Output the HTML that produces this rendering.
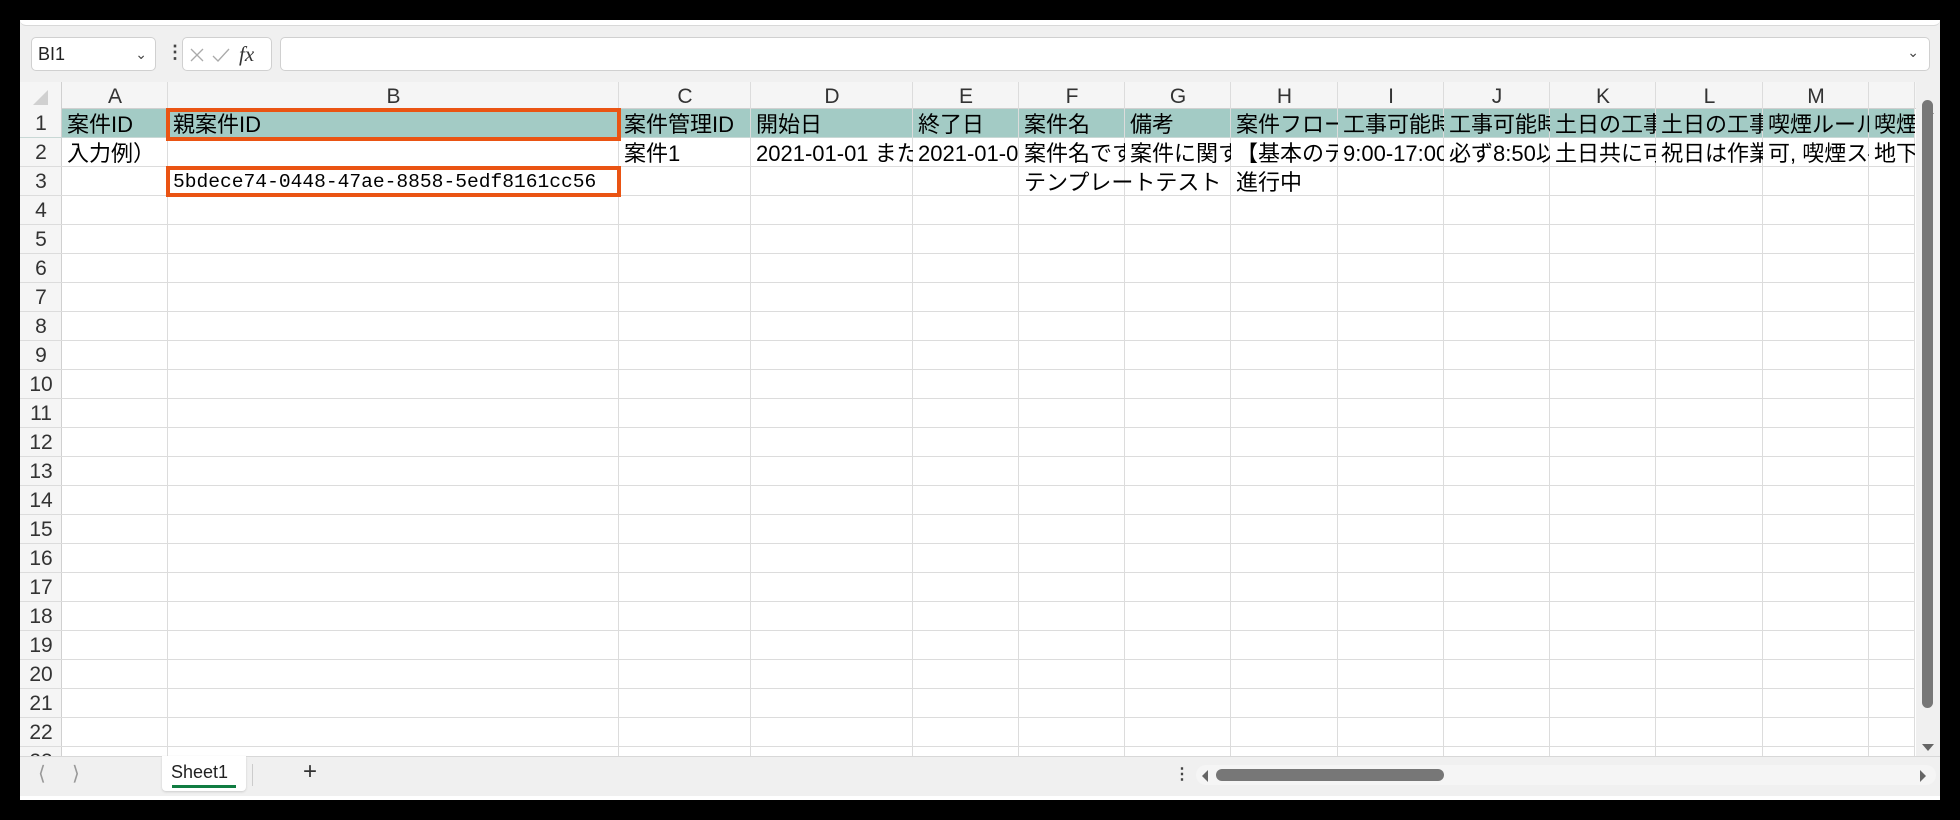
<!DOCTYPE html>
<html><head><meta charset="utf-8"><style>
*{margin:0;padding:0;box-sizing:border-box}
body{width:1960px;height:820px;background:#000;position:relative;overflow:hidden;font-family:"Liberation Sans","Noto Sans CJK JP",sans-serif}
#win{position:absolute;left:20px;top:20px;width:1920px;height:780px;background:#f0f0f0;overflow:hidden}
.a{position:absolute}
.c{position:absolute;overflow:hidden;white-space:nowrap;font-size:22px;line-height:31px;color:#000;padding-left:5px;height:28px;font-family:"Liberation Sans","Noto Sans CJK JP",sans-serif}
.vl{position:absolute;width:1px;background:#dcdcdc}
.hl{position:absolute;height:1px;background:#dcdcdc}
.rh{position:absolute;left:0;width:42px;text-align:center;font-size:21px;color:#333;line-height:30px}
.ch{position:absolute;top:62px;height:27px;text-align:center;font-size:21px;color:#333;line-height:29px}
</style></head><body>
<div id="win">
 <div class="a" style="left:0;top:0;width:1920px;height:6px;background:#fff;border-bottom:1px solid #d8d8d8;border-radius:0 0 6px 6px"></div>
 <div class="a" style="left:11px;top:17px;width:125px;height:34px;background:#fff;border:1px solid #d0d0d0;border-radius:5px;font-size:18px;line-height:32px;padding-left:6px;color:#222">BI1<span style="position:absolute;right:8px;top:0;font-size:14px;color:#444">&#8964;</span></div>
 <div class="a" style="left:146px;top:22px;font-size:18px;font-weight:bold;color:#444">&#8942;</div>
 <div class="a" style="left:162px;top:17px;width:90px;height:34px;background:#fff;border:1px solid #d0d0d0;border-radius:5px">
  <svg width="90" height="34" style="position:absolute;left:0;top:0"><path d="M8 11 L20 23 M20 11 L8 23" stroke="#aaa" stroke-width="1.3" fill="none"/><path d="M30 18 L35 23 L46 11" stroke="#aaa" stroke-width="1.3" fill="none"/></svg>
  <span style="position:absolute;left:56px;top:4px;font-family:'Liberation Serif',serif;font-style:italic;font-size:21px;color:#333">fx</span></div>
 <div class="a" style="left:260px;top:17px;width:1650px;height:34px;background:#fff;border:1px solid #d0d0d0;border-radius:5px"><span style="position:absolute;right:10px;top:6px;font-size:14px;color:#444">&#8964;</span></div>
 <div class="a" style="left:0;top:62px;width:1896px;height:674px;background:#fff"></div>
 <div class="a" style="left:0;top:62px;width:1896px;height:27px;background:#f5f5f5;border-bottom:1px solid #d0d0d0"></div>
 <div class="a" style="left:0;top:62px;width:42px;height:674px;background:#f5f5f5;border-right:1px solid #d0d0d0"></div>
 <svg class="a" style="left:10px;top:68px" width="20" height="18"><path d="M18 2 L18 17 L3 17 Z" fill="#d0d0d0"/></svg>
 <div id="g"></div>
 <div class="a" style="left:1896px;top:62px;width:24px;height:674px;background:#f0f0f0"></div>
 <svg class="a" style="left:1900px;top:84px" width="16" height="12"><path d="M2 10 L8 3 L14 10 Z" fill="#666"/></svg>
 <div class="a" style="left:1902px;top:80px;width:11px;height:608px;background:#777;border-radius:6px"></div>
 <svg class="a" style="left:1900px;top:722px" width="16" height="12"><path d="M2 2 L8 9 L14 2 Z" fill="#666"/></svg>
 <div class="a" style="left:0;top:736px;width:1920px;height:40px;background:#f0f0f0;border-top:1px solid #d8d8d8"></div>
 <div class="a" style="left:18px;top:741px;font-size:20px;color:#999">&#10216;</div>
 <div class="a" style="left:52px;top:741px;font-size:20px;color:#999">&#10217;</div>
 <div class="a" style="left:142px;top:736px;width:84px;height:35px;background:#fff;border-radius:0 0 4px 4px;box-shadow:0 1px 2px #ccc"></div>
 <div class="a" style="left:151px;top:742px;font-size:18px;color:#222">Sheet1</div>
 <div class="a" style="left:152px;top:765px;width:64px;height:3px;background:#107c41"></div>
 <div class="a" style="left:232px;top:744px;width:1px;height:22px;background:#ccc"></div>
 <div class="a" style="left:283px;top:738px;font-size:24px;color:#333">+</div>
 <div class="a" style="left:1154px;top:744px;font-size:16px;font-weight:bold;color:#444">&#8942;</div>
 <div class="a" style="left:1176px;top:745px;width:740px;height:20px;background:#f5f5f5;border-radius:10px"></div>
 <svg class="a" style="left:1180px;top:749px" width="10" height="14"><path d="M8 1 L2 7 L8 13 Z" fill="#666"/></svg>
 <div class="a" style="left:1196px;top:749px;width:228px;height:12px;background:#777;border-radius:6px"></div>
 <svg class="a" style="left:1898px;top:749px" width="10" height="14"><path d="M2 1 L8 7 L2 13 Z" fill="#666"/></svg>
 <div class="a" style="left:0;top:776px;width:1920px;height:4px;background:#fff"></div>
</div>
<script>
var X=[42,148,599,731,893,999,1105,1211,1318,1424,1530,1636,1743,1849,1895];
var L="ABCDEFGHIJKLM ";
var h="";
for(var i=0;i<14;i++){h+='<div class="ch" style="left:'+X[i]+'px;width:'+(X[i+1]-X[i])+'px">'+L[i]+'</div>';}
h+='<div class="a" style="left:42px;top:89px;width:1853px;height:29px;background:#a3cbc5"></div>';
for(var r=1;r<=23;r++){var t=89+(r-1)*29;h+='<div class="rh" style="top:'+t+'px">'+r+'</div>';h+='<div class="hl" style="left:0;width:1895px;top:'+(t+28)+'px;'+(r==1?'background:#c8d8d5':'')+'"></div>';}
for(var i=1;i<X.length;i++){h+='<div class="vl" style="left:'+(X[i]-1)+'px;top:62px;height:674px"></div>';}
function c(col,row,txt,span,extra){var x=X[col],w=X[col+(span||1)]-x;var t=89+(row-1)*29;h+='<div class="c" style="left:'+x+'px;top:'+t+'px;width:'+w+'px;'+(extra||'')+'">'+txt+'</div>';}
var r1=["案件ID","親案件ID","案件管理ID","開始日","終了日","案件名","備考","案件フロー","工事可能時間","工事可能時間","土日の工事","土日の工事","喫煙ルール","喫煙"];
for(var i=0;i<14;i++)c(i,1,r1[i]);
c(0,2,"入力例）");c(2,2,"案件1");c(3,2,"2021-01-01 または");c(4,2,"2021-01-01");c(5,2,"案件名です");c(6,2,"案件に関する");c(7,2,"【基本のテンプレ");c(8,2,"9:00-17:00");c(9,2,"必ず8:50以");c(10,2,"土日共に可");c(11,2,"祝日は作業");c(12,2,"可, 喫煙スペース");c(13,2,"地下");
c(1,3,"5bdece74-0448-47ae-8858-5edf8161cc56",1,"font-family:'Liberation Mono',monospace;font-size:19.6px;line-height:30px");
c(5,3,"テンプレートテスト",2);c(7,3,"進行中");
document.getElementById('g').innerHTML=h;
</script>
<div class="a" style="left:166px;top:108px;width:455px;height:33px;border:4px solid #ea5413"></div>
<div class="a" style="left:166px;top:166px;width:455px;height:31px;border:4px solid #ea5413"></div>
</body></html>
